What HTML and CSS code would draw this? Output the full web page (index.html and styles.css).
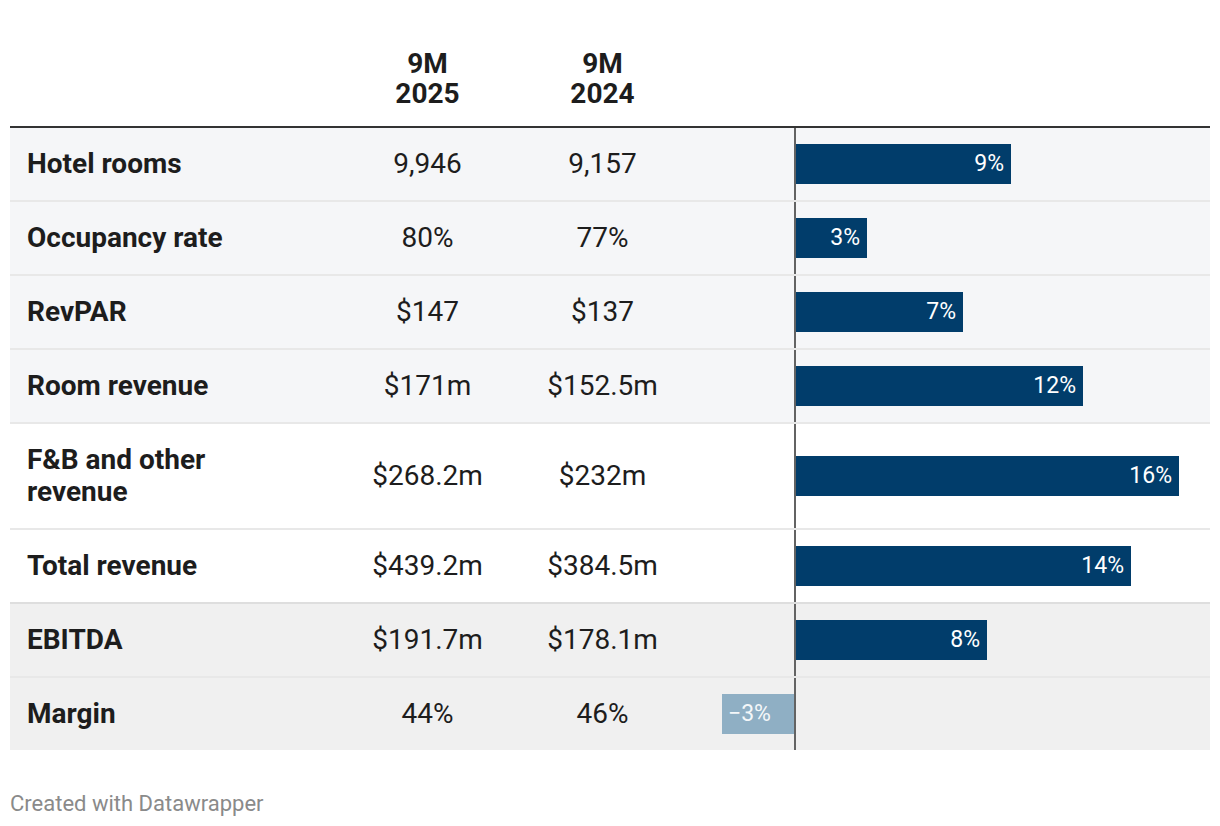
FILE: index.html
```html
<!DOCTYPE html>
<html lang="en">
<head>
<meta charset="utf-8">
<title>Hotel metrics 9M 2025 vs 9M 2024</title>
<link rel="stylesheet" href="styles.css">
</head>
<body>
<div class="chart">
  <div class="table">
    <div class="row head">
      <div class="cell label"></div>
      <div class="cell num">9M<br>2025</div>
      <div class="cell num">9M<br>2024</div>
      <div class="cell bars"></div>
    </div>
    <div class="row blue">
      <div class="cell label">Hotel rooms</div>
      <div class="cell num">9,946</div>
      <div class="cell num">9,157</div>
      <div class="cell bars"><span class="axis"></span><div class="bar" style="width:216px">9%</div></div>
    </div>
    <div class="row blue">
      <div class="cell label">Occupancy rate</div>
      <div class="cell num">80%</div>
      <div class="cell num">77%</div>
      <div class="cell bars"><span class="axis"></span><div class="bar" style="width:72px">3%</div></div>
    </div>
    <div class="row blue">
      <div class="cell label">RevPAR</div>
      <div class="cell num">$147</div>
      <div class="cell num">$137</div>
      <div class="cell bars"><span class="axis"></span><div class="bar" style="width:168px">7%</div></div>
    </div>
    <div class="row blue">
      <div class="cell label">Room revenue</div>
      <div class="cell num">$171m</div>
      <div class="cell num">$152.5m</div>
      <div class="cell bars"><span class="axis"></span><div class="bar" style="width:288px">12%</div></div>
    </div>
    <div class="row white">
      <div class="cell label">F&amp;B and other<br>revenue</div>
      <div class="cell num">$268.2m</div>
      <div class="cell num">$232m</div>
      <div class="cell bars"><span class="axis"></span><div class="bar" style="width:384px">16%</div></div>
    </div>
    <div class="row white before-grey">
      <div class="cell label">Total revenue</div>
      <div class="cell num">$439.2m</div>
      <div class="cell num">$384.5m</div>
      <div class="cell bars"><span class="axis"></span><div class="bar" style="width:336px">14%</div></div>
    </div>
    <div class="row grey">
      <div class="cell label">EBITDA</div>
      <div class="cell num">$191.7m</div>
      <div class="cell num">$178.1m</div>
      <div class="cell bars"><span class="axis"></span><div class="bar" style="width:192px">8%</div></div>
    </div>
    <div class="row grey last">
      <div class="cell label">Margin</div>
      <div class="cell num">44%</div>
      <div class="cell num">46%</div>
      <div class="cell bars"><span class="axis"></span><div class="bar neg" style="width:73px">−3%</div></div>
    </div>
  </div>
  <div class="footer">Created with Datawrapper</div>
</div>
</body>
</html>
```

FILE: styles.css
```css
html, body {
  margin: 0;
  padding: 0;
  background: #ffffff;
}

body {
  font-family: Roboto, "Liberation Sans", Arial, sans-serif;
  color: #1d1d1d;
}

.chart {
  padding: 0 10px;
}

.table {
  width: 1200px;
}

.row {
  display: grid;
  grid-template-columns: 330px 175px 175px 520px;
  border-bottom: 2px solid #e8e8e8;
}

.row.head {
  border-bottom: 2px solid #333333;
}

.row.last {
  border-bottom: none;
}

.row.blue { background: #f5f6f8; }
.row.white { background: #ffffff; }
.row.grey { background: #f0f0f0; }
.row.before-grey { border-bottom-color: #dedede; }

.cell {
  font-size: 28px;
  line-height: 32px;
  padding: 20px 0;
}

.head .cell {
  padding: 49px 0 17px;
  line-height: 30px;
  font-weight: 700;
  align-self: end;
}

.cell.label {
  font-weight: 700;
  padding-left: 17px;
}

.cell.num {
  text-align: center;
  align-self: center;
}

.row:not(.head) .cell.num {
  padding: 0;
}

.cell.bars {
  position: relative;
  padding: 0 0 0 105px;
  display: flex;
  align-items: center;
}

.axis {
  position: absolute;
  left: 104px;
  top: 0;
  bottom: 0;
  width: 2px;
  background: #636363;
  z-index: 2;
}

.bar {
  height: 40px;
  line-height: 40px;
  background: #013d6b;
  color: #ffffff;
  font-size: 23px;
  text-align: right;
  padding-right: 7px;
  box-sizing: border-box;
}

.bar.neg {
  background: #8fafc4;
  margin-left: -73px;
  text-align: left;
  padding-left: 6px;
  padding-right: 0;
  color: #f4f7f9;
}

.footer {
  margin-top: 42px;
  font-size: 22px;
  line-height: 24px;
  color: #8a8a8a;
}
```
